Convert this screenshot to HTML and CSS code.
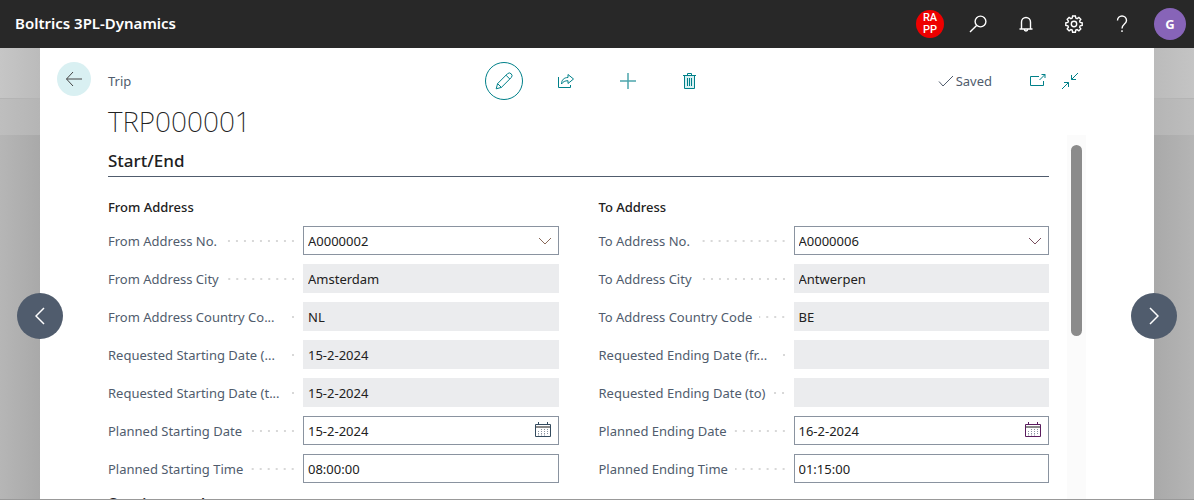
FILE: index.html
```html
<!DOCTYPE html>
<html lang="en">
<head>
<meta charset="utf-8">
<meta name="viewport" content="width=device-width, initial-scale=1">
<title>Trip TRP000001 - Boltrics 3PL-Dynamics</title>
<link rel="stylesheet" href="styles.css">
</head>
<body>
<header class="appbar">
  <a class="brand" href="#">Boltrics 3PL-Dynamics</a>
  <nav class="appbar-tools" aria-label="Application">
    <button class="env" type="button">RA<br>PP</button>
    <button class="tool" type="button" aria-label="Search"><svg width="18" height="18" viewBox="0 0 18 18"><circle cx="11.5" cy="6.5" r="5.4"/><path d="M7.6 10.4 1 17"/></svg></button>
    <button class="tool" type="button" aria-label="Notifications"><svg width="18" height="18" viewBox="0 0 18 18"><path d="M2.5 14h13M4.5 14V7a4.5 4.5 0 0 1 9 0v7M7.3 14.3a1.7 1.7 0 0 0 3.4 0"/></svg></button>
    <button class="tool" type="button" aria-label="Settings"><svg width="18" height="18" viewBox="0 0 18 18"><path d="M7.6 1h2.8l.4 2.1 1.3.5 1.8-1.2 1.9 1.9-1.2 1.8.5 1.3 2.1.4v2.6l-2.1.4-.5 1.3 1.2 1.8-1.9 1.9-1.8-1.2-1.3.5-.4 2.1H7.6l-.4-2.1-1.3-.5-1.8 1.2-1.9-1.9 1.2-1.8-.5-1.3L.8 10.400V7.800l2.100-.4.500-1.300-1.200-1.800 1.900-1.900 1.800 1.200 1.300-.5z"/><circle cx="9" cy="9" r="2.700"/></svg></button>
    <button class="tool" type="button" aria-label="Help"><svg width="18" height="18" viewBox="0 0 18 18"><path d="M4.500 5.500a4.500 4.500 0 0 1 9 0c0 3.500-4.500 3.700-4.500 8"/><path d="M9 15.300v1.700"/></svg></button>
    <button class="avatar" type="button" aria-label="Account G">G</button>
  </nav>
</header>
<main class="backdrop">
  <article class="card">
    <button class="back" type="button" aria-label="Back"><svg width="18" height="16" viewBox="0 0 18 16"><path d="M8 1 1.500 8 8 15M1.500 8H17"/></svg></button>
    <div class="page">
      <div class="topbar">
        <span class="caption">Trip</span>
        <div class="actions">
          <button class="action action-on" type="button" aria-label="Edit"><svg width="18" height="18" viewBox="0 0 18 18"><path d="M1.200 16.800 2.600 11.600 12.400 1.800a2.200 2.200 0 0 1 3.800 3.800L6.400 15.400zM2.600 11.600l3.800 3.800M11 3.200l3.800 3.800"/></svg></button>
          <button class="action" type="button" aria-label="Share"><svg width="18" height="18" viewBox="0 0 18 18"><path d="M1.500 5v10.500h12V13M4.500 12c0-4 2.500-6.500 6.500-6.500V2.500L16.500 7 11 11.500V8.700c-3 0-5 1-6.500 3.300z"/></svg></button>
          <button class="action" type="button" aria-label="New"><svg class="plus" width="18" height="18" viewBox="0 0 18 18"><path d="M9 1v16M1 9h16"/></svg></button>
          <button class="action" type="button" aria-label="Delete"><svg width="18" height="18" viewBox="0 0 18 18"><path class="bin" d="M3.500 3.500h10v13h-10z"/><path d="M2 3.500h13M3.500 3.500v13h10v-13M6.500 3.500v-2h4v2M6.500 6v8M8.500 6v8M10.500 6v8"/></svg></button>
        </div>
        <div class="status">
          <span class="saved"><svg width="16" height="16" viewBox="0 0 16 16"><path d="M1 8.500 5 13 15 3"/></svg>Saved</span>
          <button class="mini" type="button" aria-label="Open in new window"><svg width="18" height="18" viewBox="0 0 18 18"><path d="M10 4.500H1.500v9h13V9M10.500 8 16 2.500M12.500 2.500H16V6"/></svg></button>
          <button class="mini" type="button" aria-label="Collapse"><svg width="18" height="18" viewBox="0 0 18 18"><path d="M17 1 10.500 7.500M10.500 3v4.500H15M1 17l6.500-6.500M3 10.500h4.500V15"/></svg></button>
        </div>
      </div>
      <h1 class="title">TRP000001</h1>
      <div class="scroller">
        <form class="form">
          <h2 class="section">Start/End</h2>
          <div class="columns">
            <fieldset class="group">
              <legend class="group-title">From Address</legend>
              <div class="row"><label class="label" for="f1"><span>From Address No.</span></label><div class="field"><select class="input" id="f1"><option>A0000002</option></select><svg class="chev" width="14" height="8" viewBox="0 0 14 8"><path d="M1 1l6 6 6-6"/></svg></div></div>
              <div class="row"><label class="label" for="f2"><span>From Address City</span></label><div class="field"><input class="input" id="f2" value="Amsterdam" readonly></div></div>
              <div class="row"><label class="label" for="f3"><span class="short">From Address Country Co...</span></label><div class="field"><input class="input" id="f3" value="NL" readonly></div></div>
              <div class="row"><label class="label" for="f4"><span class="short">Requested Starting Date (...</span></label><div class="field"><input class="input" id="f4" value="15-2-2024" readonly></div></div>
              <div class="row"><label class="label" for="f5"><span class="short">Requested Starting Date (t...</span></label><div class="field"><input class="input" id="f5" value="15-2-2024" readonly></div></div>
              <div class="row"><label class="label" for="f6"><span>Planned Starting Date</span></label><div class="field"><input class="input" id="f6" value="15-2-2024"><button class="pick" type="button" aria-label="Pick starting date"><svg width="16" height="16" viewBox="0 0 16 16"><path d="M.5 2.500h15v12H.5z"/><path class="band" d="M1 5h14"/><path d="M3.500 0v3M12.500 0v3"/><path class="days" d="M6 7.500h8M3 9.500h11M3 11.500h11M3 13h8"/></svg></button></div></div>
              <div class="row"><label class="label" for="f7"><span>Planned Starting Time</span></label><div class="field"><input class="input" id="f7" value="08:00:00"></div></div>
            </fieldset>
            <fieldset class="group">
              <legend class="group-title">To Address</legend>
              <div class="row"><label class="label" for="t1"><span>To Address No.</span></label><div class="field"><select class="input" id="t1"><option>A0000006</option></select><svg class="chev chev-alt" width="14" height="8" viewBox="0 0 14 8"><path d="M1 1l6 6 6-6"/></svg></div></div>
              <div class="row"><label class="label" for="t2"><span>To Address City</span></label><div class="field"><input class="input" id="t2" value="Antwerpen" readonly></div></div>
              <div class="row"><label class="label" for="t3"><span>To Address Country Code</span></label><div class="field"><input class="input" id="t3" value="BE" readonly></div></div>
              <div class="row"><label class="label" for="t4"><span class="short">Requested Ending Date (fr...</span></label><div class="field"><input class="input" id="t4" readonly></div></div>
              <div class="row"><label class="label" for="t5"><span>Requested Ending Date (to)</span></label><div class="field"><input class="input" id="t5" readonly></div></div>
              <div class="row"><label class="label" for="t6"><span>Planned Ending Date</span></label><div class="field"><input class="input" id="t6" value="16-2-2024"><button class="pick pick-alt" type="button" aria-label="Pick ending date"><svg width="16" height="16" viewBox="0 0 16 16"><path d="M.5 2.500h15v12H.5z"/><path class="band" d="M1 5h14"/><path d="M3.500 0v3M12.500 0v3"/><path class="days" d="M6 7.500h8M3 9.500h11M3 11.500h11M3 13h8"/></svg></button></div></div>
              <div class="row"><label class="label" for="t7"><span>Planned Ending Time</span></label><div class="field"><input class="input" id="t7" value="01:15:00"></div></div>
            </fieldset>
          </div>
          <h2 class="section section-next">Section package :</h2>
        </form>
        <div class="track"><div class="thumb"></div></div>
      </div>
    </div>
    <button class="pager pager-prev" type="button" aria-label="Previous"><svg width="10" height="18" viewBox="0 0 10 18"><path d="M9 1 1 9l8 8"/></svg></button>
    <button class="pager pager-next" type="button" aria-label="Next"><svg width="10" height="18" viewBox="0 0 10 18"><path d="m1 1 8 8-8 8"/></svg></button>
  </article>
</main>
</body>
</html>
```
FILE: styles.css
```css
* { box-sizing: border-box; }
html, body { height: 100%; }
body {
  margin: 0;
  display: flex;
  flex-direction: column;
  overflow: hidden;
  font-family: "Noto Sans", "Open Sans", sans-serif;
  font-size: 13px;
  line-height: 20px;
  color: #212121;
}
button, input, select { font: inherit; color: inherit; }
button { display: grid; place-items: center; padding: 0; border: 0; background: none; }
svg { display: block; fill: none; stroke: currentColor; }

.appbar {
  flex: none;
  display: flex;
  align-items: center;
  justify-content: space-between;
  height: 48px;
  padding: 0 8px 0 15px;
  background: #282828;
  color: #fff;
}
.brand { padding-bottom: 3px; color: inherit; font-size: 15px; font-weight: 600; text-decoration: none; }
.appbar-tools { display: flex; align-items: center; }
.tool { width: 48px; height: 48px; }
.tool svg { stroke-width: 1.4; }
.env {
  display: block;
  width: 28px;
  height: 28px;
  margin-right: 10px;
  border-radius: 50%;
  background: #e00;
  font-family: Roboto, "Noto Sans", sans-serif;
  font-size: 11px;
  font-weight: 500;
  line-height: 12px;
  text-align: center;
}
.avatar {
  width: 32px;
  height: 32px;
  margin-left: 8px;
  border-radius: 50%;
  background: #8764b8;
  font-weight: 700;
}

.backdrop {
  flex: 1;
  min-height: 0;
  display: flex;
  padding: 0 40px;
  border-bottom: 1px solid #999;
  background:
    linear-gradient(#b4b4b4, #b4b4b4) 0 50px / 100% 1px no-repeat,
    linear-gradient(90deg, #c6c6c6, #bbb 40px, #bbb calc(100% - 40px), #c4c4c4) 0 0 / 100% 50px no-repeat,
    linear-gradient(90deg, #bebebe, #b5b5b5 40px, #b5b5b5 calc(100% - 40px), #bdbdbd) 0 0 / 100% 87px no-repeat,
    linear-gradient(90deg, #b6b6b6, #a9a9a9 40px, #a9a9a9 calc(100% - 40px), #b5b5b5);
}
.card {
  position: relative;
  flex: 1;
  display: flex;
  gap: 17px;
  padding: 14px 68px 0 17px;
  background: #fff;
}
.back {
  flex: none;
  width: 34px;
  height: 34px;
  border-radius: 50%;
  background: #d9f0f2;
  color: #444;
}
.page { flex: 1; min-width: 0; display: flex; flex-direction: column; }
.topbar { display: grid; grid-template-columns: 1fr auto 1fr; align-items: center; height: 38px; }
.caption, .saved { color: #505c6d; }
.actions { display: flex; gap: 24px; color: #008089; }
.action { width: 38px; height: 38px; border-radius: 50%; }
.action-on { border: 1px solid #008089; }
.plus { stroke-width: 1.5; opacity: .7; }
.bin { fill: #d9f0f2; stroke: none; }
.status { display: flex; align-items: center; justify-content: flex-end; color: #008089; }
.saved { display: flex; align-items: center; gap: 2px; margin-right: 30px; }
.mini { width: 32px; height: 32px; }
.title {
  margin: 7px 0 0;
  font-size: 28px;
  font-weight: 200;
  line-height: 28px;
}
.scroller { flex: 1; min-height: 0; display: flex; gap: 18px; }
.form { flex: 1; min-width: 0; overflow: hidden; }
.section {
  margin: 0;
  padding: 14px 0 3px;
  border-bottom: 1px solid #505c6d;
  font-size: 17px;
  font-weight: 500;
  line-height: 24px;
}
.section-next { padding-top: 0; }
.columns { display: grid; grid-template-columns: 1fr 1fr; gap: 40px; padding-top: 20px; }
.group { min-width: 0; margin: 0; padding: 0; border: 0; }
.group-title { padding: 0 0 9px; font-weight: 500; }
.row { display: grid; grid-template-columns: 195px 1fr; align-items: center; margin-bottom: 9px; }
.label { display: flex; align-items: center; padding-right: 9px; color: #505c6d; white-space: nowrap; }
.short { width: 175px; }
.label::after {
  content: "";
  flex: 1;
  height: 2px;
  margin-left: 7px;
  background: linear-gradient(90deg, transparent 6px, #d8d8d8 6px) right 0 / 8px 2px repeat-x;
}
.field { position: relative; height: 29px; }
.input {
  width: 100%;
  height: 29px;
  padding: 0 4px;
  border: 1px solid #8a93a0;
  border-radius: 0;
  outline: 0;
  background: #fff;
  appearance: none;
}
.input:read-only:not(select) { border-color: #ebecee; background: #ebecee; }
.chev { position: absolute; top: 11px; right: 7px; color: #8a6a5a; pointer-events: none; }
.chev-alt { color: #7a5060; }
.pick { position: absolute; top: 6px; right: 8px; color: #334a5e; }
.pick-alt { color: #5a1c5e; }
.band { stroke: #8a8a8a; stroke-width: 2; }
.days { stroke: #8a93a0; stroke-dasharray: 1 2; }
.track { flex: none; width: 19px; padding: 10px 4px 0; background: #fbfbfb; }
.thumb { height: 191px; border-radius: 6px; background: #8b8b8b; }
.pager {
  position: absolute;
  top: 245px;
  width: 46px;
  height: 46px;
  border-radius: 50%;
  background: #505c6d;
  color: #fff;
}
.pager svg { stroke-width: 1.5; }
.pager-prev { left: -23px; }
.pager-next { right: -23px; }
```
